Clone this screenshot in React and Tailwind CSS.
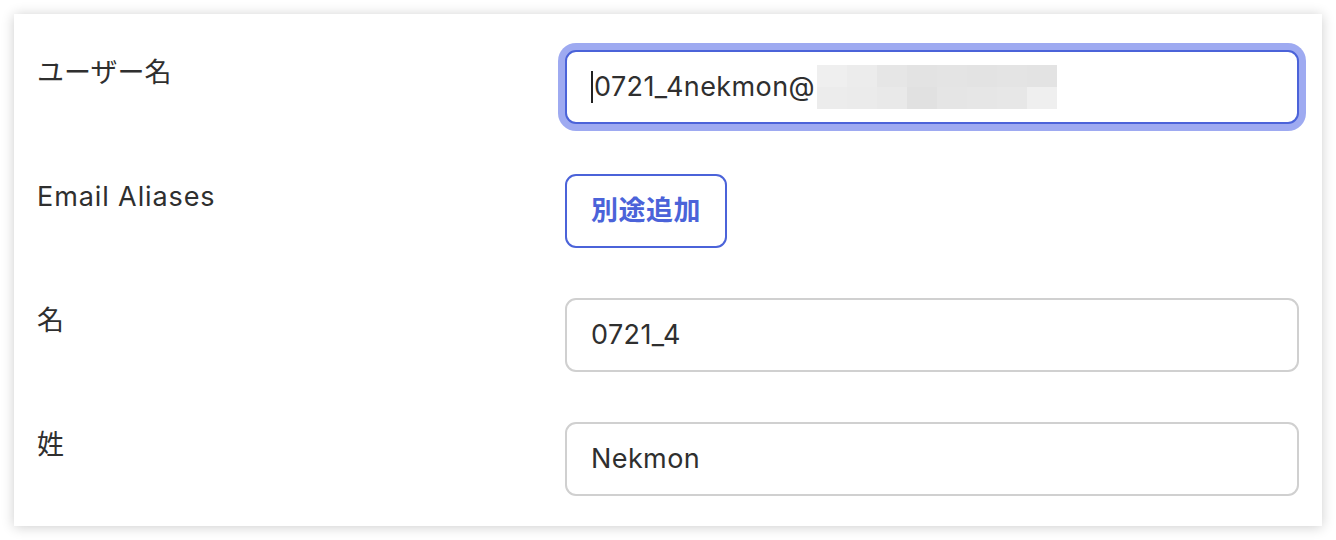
import { useState } from "react";

const font = { fontFamily: '"Inter", "Noto Sans CJK JP", sans-serif' };

// pixelated cover over the hidden part of the address
const mosaic = [
  ["#efefef", "#ececec", "#e6e6e6", "#e3e3e3", "#e4e4e4", "#e3e3e3", "#e4e4e4", "#e3e3e3"],
  ["#ececec", "#ebebeb", "#e9e9e9", "#e1e1e1", "#e5e5e5", "#e6e6e6", "#e7e7e7", "#efefef"],
];

function Field({ label, latin, children }) {
  return (
    <div className="flex">
      <div
        className={`w-[551px] shrink-0 pl-[23px] pt-[6px] text-[27px] leading-[34px] text-[#2f2f2f] ${
          latin ? "tracking-[0.9px]" : ""
        }`}
      >
        {label}
      </div>
      <div className="flex-1">{children}</div>
    </div>
  );
}

function TextInput({ value }) {
  return (
    <div className="flex h-[74px] items-center rounded-[11px] border-2 border-[#d0d0d0] bg-white px-[24px] text-[27px] tracking-[0.4px] text-[#2f2f2f]">
      {value}
    </div>
  );
}

export default function App() {
  const [first] = useState("0721_4");
  const [last] = useState("Nekmon");

  return (
    <div className="h-[540px] w-[1336px] bg-white p-[14px]" style={font}>
      <div className="flex h-[512px] flex-col gap-[50px] bg-white pr-[23px] pt-[36px] shadow-[0_1px_12px_rgba(0,0,0,0.2)]">
        <Field label="ユーザー名">
          <div className="flex h-[74px] items-center rounded-[11px] border-2 border-[#4b63d9] bg-white px-[24px] text-[27px] tracking-[0.4px] text-[#2f2f2f] ring-[7px] ring-[#9eaaf1]">
            <span className="mr-px h-[32px] w-[2px] bg-[#222]" />
            <span>0721_4nekmon@</span>
            <div className="ml-[2px] flex flex-col">
              {mosaic.map((row, i) => (
                <div key={i} className="flex">
                  {row.map((c, j) => (
                    <span key={j} className="h-[22px] w-[30px]" style={{ backgroundColor: c }} />
                  ))}
                </div>
              ))}
            </div>
          </div>
        </Field>
        <Field label="Email Aliases" latin>
          <button className="h-[74px] rounded-[11px] border-2 border-[#4b63d9] bg-white px-[24px] text-[27px] font-bold tracking-[0.5px] text-[#4b63d9]">
            別途追加
          </button>
        </Field>
        <Field label="名">
          <TextInput value={first} />
        </Field>
        <Field label="姓">
          <TextInput value={last} />
        </Field>
      </div>
    </div>
  );
}
